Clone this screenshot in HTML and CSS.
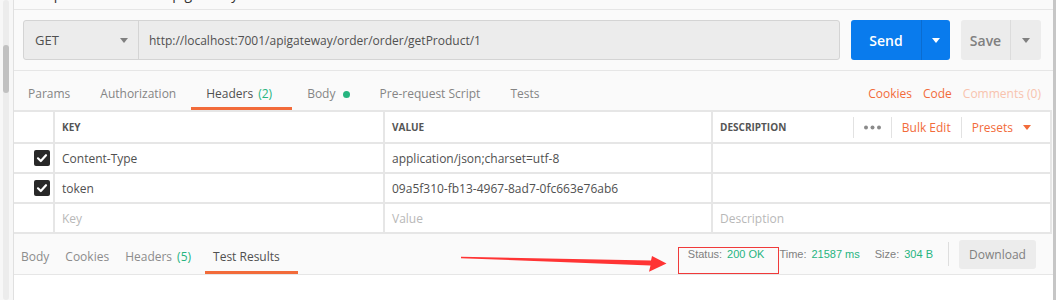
FILE: index.html
```html
<!DOCTYPE html>
<html lang="en">
<head>
    <meta charset="UTF-8">
    <meta name="viewport" content="width=device-width, initial-scale=1.0">
    <title>Postman - getProduct</title>
    <link rel="stylesheet" href="styles.css">
</head>
<body>
    <div class="sidebar">
        <div class="track"><div class="thumb"></div></div>
    </div>
    <div class="main">
        <div class="title"><span>Test product from an apigateway with token</span></div>

        <div class="url-row">
            <div class="request">
                <div class="method">GET <i class="caret caret-gray"></i></div>
                <div class="url">http://localhost:7001/apigateway/order/order/getProduct/1</div>
            </div>
            <div class="split send">
                <span class="label">Send</span>
                <span class="drop"><i class="caret caret-white"></i></span>
            </div>
            <div class="split save">
                <span class="label">Save</span>
                <span class="drop"><i class="caret caret-gray"></i></span>
            </div>
        </div>

        <div class="req-tabs">
            <a href="#" class="tab">Params</a>
            <a href="#" class="tab">Authorization</a>
            <a href="#" class="tab active">Headers<span class="count">(2)</span></a>
            <a href="#" class="tab">Body <span class="dot"></span></a>
            <a href="#" class="tab">Pre-request Script</a>
            <a href="#" class="tab">Tests</a>
            <div class="req-links">
                <a href="#">Cookies</a>
                <a href="#">Code</a>
                <a href="#" class="muted">Comments (0)</a>
            </div>
        </div>

        <div class="kv-table">
            <div class="cell"></div>
            <div class="cell head">KEY</div>
            <div class="cell head">VALUE</div>
            <div class="cell head">
                DESCRIPTION
                <div class="head-tools">
                    <span class="sep"></span>
                    <span class="tool">
                        <svg width="17" height="5" viewBox="0 0 17 5"><circle cx="2" cy="2.5" r="2" fill="#8a8a8a"/><circle cx="8.5" cy="2.5" r="2" fill="#8a8a8a"/><circle cx="15" cy="2.5" r="2" fill="#8a8a8a"/></svg>
                    </span>
                    <span class="sep"></span>
                    <span class="tool link">Bulk Edit</span>
                    <span class="sep"></span>
                    <span class="tool link">Presets <i class="caret caret-orange"></i></span>
                </div>
            </div>

            <div class="cell check-cell"><span class="checkbox"><svg width="16" height="16" viewBox="0 0 16 16"><path d="M4 8.3 L6.8 11 L12 5.2" fill="none" stroke="#fff" stroke-width="2.2" stroke-linecap="round" stroke-linejoin="round"/></svg></span></div>
            <div class="cell">Content-Type</div>
            <div class="cell">application/json;charset=utf-8</div>
            <div class="cell"></div>

            <div class="cell check-cell"><span class="checkbox"><svg width="16" height="16" viewBox="0 0 16 16"><path d="M4 8.3 L6.8 11 L12 5.2" fill="none" stroke="#fff" stroke-width="2.2" stroke-linecap="round" stroke-linejoin="round"/></svg></span></div>
            <div class="cell">token</div>
            <div class="cell">09a5f310-fb13-4967-8ad7-0fc663e76ab6</div>
            <div class="cell"></div>

            <div class="cell"></div>
            <div class="cell placeholder">Key</div>
            <div class="cell placeholder">Value</div>
            <div class="cell placeholder">Description</div>
        </div>

        <div class="response-bar">
            <a href="#" class="res-tab">Body</a>
            <a href="#" class="res-tab">Cookies</a>
            <a href="#" class="res-tab">Headers<span class="count">(5)</span></a>
            <a href="#" class="res-tab active">Test Results</a>
            <div class="res-meta">
                <span class="stat">Status:<b>200 OK</b></span>
                <span class="stat">Time:<b>21587 ms</b></span>
                <span class="stat">Size:<b>304 B</b></span>
                <span class="divider"></span>
                <span class="download">Download</span>
            </div>
        </div>
        <div class="response-body"></div>
    </div>
    <div class="edge"></div>

    <!-- red markup drawn over the screenshot -->
    <svg class="markup" width="1057" height="300" viewBox="0 0 1057 300">
        <polygon points="461,256.8 651,260.6 652,256 666.5,263.5 649,271.8 650.5,265.6 461,258.2" fill="#ff3434"/>
        <rect x="678.5" y="247.5" width="100" height="26" fill="none" stroke="#f03a3a" stroke-width="1"/>
    </svg>
</body>
</html>
```

FILE: styles.css
```css
body {
    margin: 0;
    height: 300px;
    display: flex;
    position: relative;
    overflow: hidden;
    font-family: "Open Sans", sans-serif;
    color: #505050;
    background-color: #ffffff;
}
a {
    text-decoration: none;
    color: inherit;
}
.sidebar {
    width: 14px;
    box-sizing: border-box;
    padding-left: 3px;
    border-right: 1px solid #e0e0e0;
    background-color: #f7f7f7;
}
.track {
    width: 6px;
    height: 100%;
    background-color: #ececec;
    border-radius: 3px;
    overflow: hidden;
}
.thumb {
    margin-top: 45px;
    height: 48px;
    background-color: #c1c1c1;
    border-radius: 3px;
}
.main {
    flex: 1;
    display: flex;
    flex-direction: column;
    background-color: #fafafa;
}
.edge {
    width: 4px;
    box-sizing: border-box;
    border-left: 3px solid #c6c6c6;
    background-color: #ffffff;
}

/* title, only the bottom of it is visible */
.title {
    height: 9px;
    overflow: hidden;
    padding-left: 9px;
    border-bottom: 1px solid #e6e6e6;
    font-size: 14px;
    line-height: 14px;
    color: #333;
    white-space: nowrap;
}
.title span {
    display: block;
    margin-top: -13px;
}

/* url bar */
.url-row {
    display: flex;
    gap: 11px;
    padding: 10px 12px 10px 9px;
}
.request {
    flex: 1;
    height: 40px;
    box-sizing: border-box;
    display: flex;
    border: 1px solid #d4d4d4;
    border-radius: 3px;
    background-color: #ececec;
}
.method {
    width: 115px;
    box-sizing: border-box;
    display: flex;
    align-items: center;
    justify-content: space-between;
    padding: 0 10px 0 11px;
    border-right: 1px solid #d4d4d4;
    font-size: 13px;
}
.url {
    flex: 1;
    display: flex;
    align-items: center;
    padding-left: 10px;
    font-size: 12px;
}
.split {
    height: 40px;
    display: flex;
    border-radius: 3px;
}
.split .label {
    display: flex;
    align-items: center;
    justify-content: center;
    font-size: 14px;
    font-weight: 600;
}
.split .drop {
    display: flex;
    align-items: center;
    justify-content: center;
}
.send {
    background-color: #097bed;
    color: #ffffff;
}
.send .label {
    width: 70px;
}
.send .drop {
    width: 28px;
    border-left: 1px solid #0a6cd0;
}
.save {
    background-color: #ececec;
    color: #808080;
}
.save .label {
    width: 49px;
}
.save .drop {
    width: 30px;
    border-left: 1px solid #dcdcdc;
}
.caret {
    display: inline-block;
    width: 0;
    height: 0;
    border-left: 4px solid transparent;
    border-right: 4px solid transparent;
    border-top: 5px solid #808080;
}
.caret-white {
    border-top-color: #ffffff;
}
.caret-orange {
    border-top-color: #f26b3a;
    margin-left: 10px;
    vertical-align: middle;
}

/* request tabs */
.req-tabs {
    display: flex;
    border-top: 1px solid #e6e6e6;
}
.tab {
    padding: 14px 15px 4px;
    line-height: 18px;
    font-size: 12px;
    color: #858585;
    border-bottom: 3px solid transparent;
}
.tab:first-child {
    padding-left: 14px;
}
.tab.active {
    padding-right: 20px;
    color: #505050;
    border-bottom-color: #f26b3a;
}
.count {
    margin-left: 5px;
    color: #26b47f;
}
.dot {
    display: inline-block;
    width: 7px;
    height: 7px;
    margin-left: 4px;
    border-radius: 50%;
    background-color: #26b47f;
    vertical-align: 0;
}
.req-links {
    margin-left: auto;
    display: flex;
    gap: 11px;
    padding: 14px 12px 0 0;
    line-height: 18px;
    font-size: 12px;
    color: #f26b3a;
}
.req-links .muted {
    color: #f8c3ae;
}

/* key / value table */
.kv-table {
    display: grid;
    grid-template-columns: 39px 328px 326px 1fr;
    grid-template-rows: 30px 28px 28px 28px;
    gap: 2px;
    padding: 2px 2px 2px 0;
    margin-right: 1px;
    background-color: #e6e6e6;
}
.cell {
    display: flex;
    align-items: center;
    padding: 0 7px;
    background-color: #ffffff;
    font-size: 12px;
    white-space: nowrap;
}
.cell.head {
    font-size: 10px;
    font-weight: 700;
    color: #555;
}
.cell.placeholder {
    color: #b8b8b8;
}
.check-cell {
    justify-content: flex-end;
    padding: 0 3px;
}
.checkbox {
    width: 16px;
    height: 16px;
    border-radius: 2px;
    background-color: #282828;
    display: flex;
}
.head-tools {
    margin-left: auto;
    display: flex;
    align-items: center;
    padding-right: 2px;
    font-weight: 400;
}
.head-tools .sep {
    width: 1px;
    height: 21px;
    background-color: #e2e2e2;
}
.head-tools .tool {
    display: flex;
    align-items: center;
    padding: 0 10px;
    font-size: 12px;
}
.head-tools .link {
    color: #f26b3a;
}

/* response bar */
.response-bar {
    display: flex;
    border-bottom: 1px solid #e6e6e6;
}
.res-tab {
    padding: 14px 8px 5px;
    line-height: 18px;
    font-size: 12px;
    color: #8c8c8c;
    border-bottom: 3px solid transparent;
}
.res-tab:first-child {
    padding-left: 7px;
}
.res-tab.active {
    margin-left: 6px;
    padding-right: 18px;
    color: #505050;
    border-bottom-color: #f26b3a;
}
.res-meta {
    margin-left: auto;
    display: flex;
    align-items: center;
    padding-right: 17px;
    font-family: "Liberation Sans", Arial, sans-serif;
    font-size: 11px;
    color: #808080;
}
.stat {
    margin-right: 15px;
}
.stat b {
    font-weight: 400;
    color: #26b47f;
    margin-left: 5px;
}
.divider {
    width: 1px;
    height: 24px;
    margin-right: 10px;
    background-color: #dedede;
}
.download {
    width: 77px;
    height: 29px;
    display: flex;
    align-items: center;
    justify-content: center;
    border-radius: 3px;
    background-color: #ececec;
    font-family: "Open Sans", sans-serif;
    font-size: 12px;
    color: #808080;
}
.response-body {
    flex: 1;
    background-color: #ffffff;
}
.markup {
    position: absolute;
    top: 0;
    left: 0;
    pointer-events: none;
}
```
